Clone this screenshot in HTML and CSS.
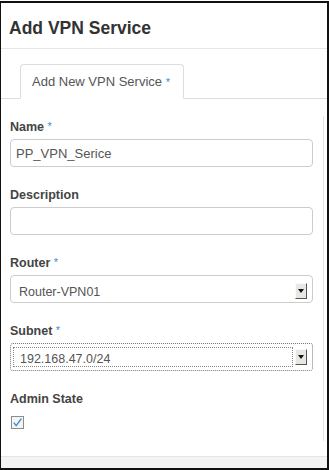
FILE: index.html
```html
<!DOCTYPE html>
<html lang="en">
  <head>
    <meta charset="UTF-8" />
    <meta name="viewport" content="width=device-width, initial-scale=1.0" />
    <title>Add VPN Service</title>
    <link rel="stylesheet" href="styles.css">
  </head>
  <body>
    <div class="frame">
      <div class="modal-header">
        <h3>Add VPN Service</h3>
      </div>

      <div class="tabs">
        <div class="tab">Add New VPN Service <span class="req">*</span></div>
      </div>

      <div class="form-body">
        <div class="form-group">
          <label>Name <span class="req">*</span></label>
          <input class="form-control" type="text" value="PP_VPN_Serice" />
        </div>

        <div class="form-group">
          <label>Description</label>
          <input class="form-control" type="text" value="" />
        </div>

        <div class="form-group">
          <label>Router <span class="req">*</span></label>
          <div class="select">
            <span class="select-text">Router-VPN01</span>
            <span class="select-arrow"></span>
          </div>
        </div>

        <div class="form-group">
          <label>Subnet <span class="req">*</span></label>
          <div class="select focused">
            <span class="select-inner">192.168.47.0/24</span>
            <span class="select-arrow"></span>
          </div>
        </div>

        <div class="form-group last">
          <label>Admin State</label>
          <svg class="checkbox" width="13" height="13" viewBox="0 0 13 13">
            <rect x="0.5" y="0.5" width="12" height="12" fill="#f4f4f4" stroke="#8c8c8c" />
            <path d="M2.8 6.6 L5.2 9.6 L10.4 2.6" fill="none" stroke="#3b8cd6" stroke-width="1.4" />
          </svg>
        </div>
      </div>

      <div class="modal-footer"></div>
    </div>
  </body>
</html>
```

FILE: styles.css
```css
* {
  padding: 0;
  margin: 0;
  box-sizing: border-box;
}

body {
  background: #fff;
  font-family: "Liberation Sans", Arial, sans-serif;
}

.frame {
  margin-top: 1px;
  width: 329px;
  height: 469px;
  border: solid #111;
  border-width: 2px 2px 2px 1px;
  display: flex;
  flex-direction: column;
}

.modal-header {
  padding: 15px 8px 10px;
  border-bottom: 1px solid #e7e7e7;
}

.modal-header h3 {
  font-size: 17.5px;
  line-height: 20px;
  font-weight: bold;
  color: #333;
}

.tabs {
  display: flex;
  margin-top: 15px;
  padding-left: 19px;
  border-bottom: 1px solid #ddd;
}

.tab {
  margin-bottom: -1px;
  padding: 8px 13px 7px 11px;
  border: 1px solid #ddd;
  border-bottom-color: transparent;
  border-radius: 4px 4px 0 0;
  background: #fff;
  font-size: 13px;
  line-height: 18px;
  color: #555;
}

.req {
  color: #3a8fd0;
  font-size: 11px;
  vertical-align: top;
}

.form-body {
  margin-top: 17px;
  margin-right: 3px;
  padding: 4px 10px 12px 9px;
  border-right: 1px solid #e4e4e4;
}

.form-group {
  margin-bottom: 21px;
}

.form-group.last {
  margin-bottom: 0;
}

label {
  display: block;
  margin-bottom: 4px;
  font-size: 12.5px;
  line-height: 15px;
  font-weight: bold;
  color: #444;
}

label .req {
  font-weight: normal;
  line-height: 13px;
}

.form-control {
  display: block;
  width: 100%;
  height: 28px;
  padding: 0 5px;
  border: 1px solid #ccc;
  border-radius: 4px;
  font-family: "Liberation Sans", Arial, sans-serif;
  font-size: 13px;
  color: #555;
  outline: none;
}

.select {
  display: flex;
  align-items: center;
  height: 28px;
  padding: 0 5px 0 8px;
  border: 1px solid #ccc;
  border-radius: 4px;
  font-size: 12.5px;
  color: #555;
}

.select-text {
  flex: 1;
  padding-top: 5px;
}

.select-arrow {
  position: relative;
  width: 12px;
  height: 16px;
  margin-top: 3px;
  border: 1px solid;
  border-color: #fafafa #555 #555 #fafafa;
  background: #e9e7e3;
}

.select-arrow::after {
  content: "";
  position: absolute;
  left: 2px;
  top: 5px;
  border-left: 3px solid transparent;
  border-right: 3px solid transparent;
  border-top: 4px solid #111;
}

.select.focused {
  padding: 0 5px 0 2px;
  border: 1px dotted #777;
  border-radius: 3px;
}

.select.focused .select-arrow {
  margin-top: 0;
}

.select-inner {
  flex: 1;
  height: 20px;
  margin-right: 2px;
  padding: 4px 0 0 6px;
  border: 1px dotted #888;
  line-height: 14px;
}

.checkbox {
  display: block;
  margin-top: 9px;
  margin-left: 1px;
}

.modal-footer {
  flex: 1;
  margin-top: 15px;
  border-top: 1px solid #e5e5e5;
  background: #f4f4f4;
}
```
